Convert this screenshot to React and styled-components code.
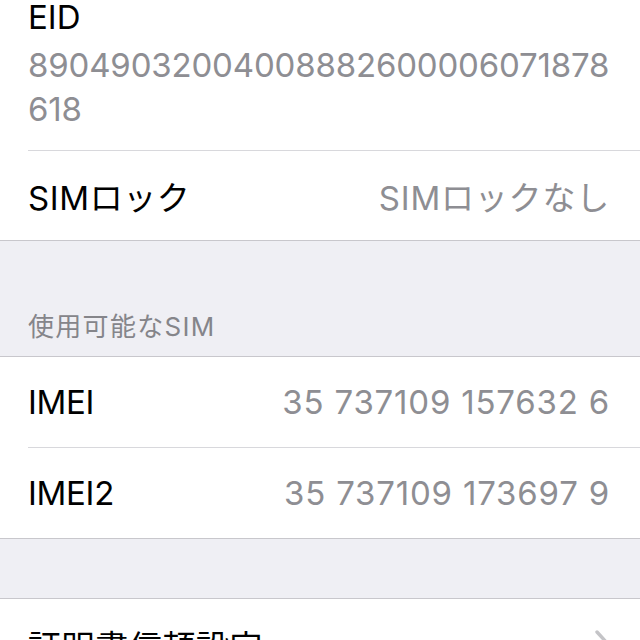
import React from "react";
import styled, { createGlobalStyle } from "styled-components";

const Global = createGlobalStyle`
  html, body { margin: 0; padding: 0; background: #efeff4; }
  body {
    font-family: Inter, "Noto Sans CJK JP", sans-serif;
    -webkit-font-smoothing: antialiased;
  }
`;

const Page = styled.div`
  width: 640px;
  height: 640px;
  overflow: hidden;
  background: #efeff4;
`;

const Group = styled.div`
  background: #fff;
  border-top: ${(p) => (p.$noTop ? "none" : "1px solid #c8c7cc")};
  border-bottom: 1px solid #c8c7cc;
`;

const Cell = styled.div`
  padding-left: 28px;
`;

const CellInner = styled.div`
  border-bottom: ${(p) => (p.$last ? "none" : "1px solid #d8d8dc")};
  padding-right: 30px;
`;

const Row = styled(CellInner)`
  height: ${(p) => p.$h || 89}px;
  display: flex;
  align-items: center;
  justify-content: space-between;
  box-sizing: border-box;
`;

const Label = styled.div`
  font-size: 33px;
  color: #000;
  letter-spacing: ${(p) => (p.$wide ? "0.6px" : "-0.3px")};
`;

const Value = styled.div`
  font-size: 33px;
  color: #8e8e93;
  letter-spacing: 0.8px;
`;

const EidBlock = styled(CellInner)`
  height: 151px;
  box-sizing: border-box;
`;

const EidLabel = styled.div`
  font-size: 33px;
  line-height: 34px;
  color: #000;
`;

const EidValue = styled.div`
  margin-top: 9px;
  font-size: 33px;
  line-height: 44px;
  color: #8e8e93;
  letter-spacing: -0.17px;
`;

const Gap = styled.div`
  height: ${(p) => p.$h}px;
  display: flex;
  align-items: flex-end;
  box-sizing: border-box;
  padding: 0 28px 13px;
`;

const Header = styled.div`
  font-size: 26px;
  color: #85858a;
  letter-spacing: 1.3px;
`;

const NavRow = styled(Row)`
  align-items: flex-start;
  padding-top: 22px;
`;

const Chevron = () => (
  <svg width="18" height="30" viewBox="0 0 18 30" style={{ marginTop: 8, marginRight: -2 }}>
    <path d="M3 3 L14 15 L3 27" fill="none" stroke="#c4c4c7" strokeWidth="3.4" strokeLinecap="round" strokeLinejoin="round" />
  </svg>
);

export default function App() {
  return (
    <Page>
      <Global />
      <Group $noTop>
        <Cell>
          <EidBlock>
            <EidLabel>EID</EidLabel>
            <EidValue>
              89049032004008882600006071878
              <br />
              618
            </EidValue>
          </EidBlock>
        </Cell>
        <Cell>
          <Row $last>
            <Label $wide>SIMロック</Label>
            <Value>SIMロックなし</Value>
          </Row>
        </Cell>
      </Group>
      <Gap $h={115}>
        <Header>使用可能なSIM</Header>
      </Gap>
      <Group>
        <Cell>
          <Row $h={91}>
            <Label>IMEI</Label>
            <Value>35 737109 157632 6</Value>
          </Row>
        </Cell>
        <Cell>
          <Row $last $h={90}>
            <Label>IMEI2</Label>
            <Value>35 737109 173697 9</Value>
          </Row>
        </Cell>
      </Group>
      <Gap $h={59} />
      <Group>
        <Cell>
          <NavRow $last $h={89}>
            <Label $wide>証明書信頼設定</Label>
            <Chevron />
          </NavRow>
        </Cell>
      </Group>
    </Page>
  );
}
